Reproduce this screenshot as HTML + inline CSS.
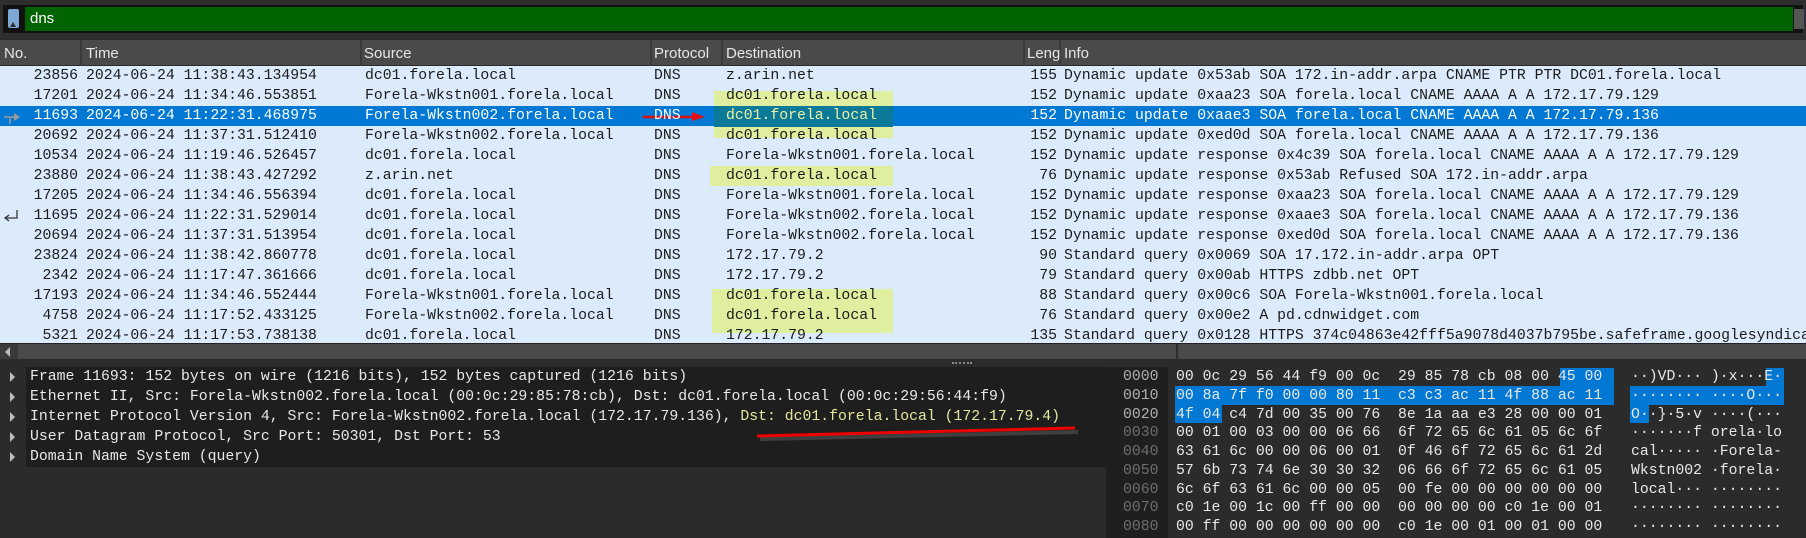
<!DOCTYPE html>
<html><head><meta charset="utf-8"><style>
*{margin:0;padding:0;box-sizing:border-box}
body{width:1806px;height:538px;background:#2b2b2b;position:relative;overflow:hidden;font-family:"Liberation Mono",monospace;font-size:14.8px}
.a{position:absolute;white-space:pre}
.ui{font-family:"Liberation Sans",sans-serif;font-size:15px;color:#e6e6e6}
.row{position:absolute;left:0;width:1806px;height:20px;background:#dcebfb;color:#1b1b1b;line-height:20px}
.sel{background:#0078d4;color:#fff}
.hl{position:absolute;background:#dfee9f}
.det{position:absolute;left:26px;width:1080px;height:20px;background:#1e1e1e;color:#e8e8e8;line-height:20px;padding-left:4px;white-space:pre}
.tri{position:absolute;left:10px;width:0;height:0;border-left:5px solid #bdbdbd;border-top:5px solid transparent;border-bottom:5px solid transparent}
.hx{position:absolute;white-space:pre;color:#e8e8e8;line-height:18.75px}
.off{position:absolute;left:1123px;white-space:pre;line-height:18.75px}
</style></head><body>
<div class="a" style="left:0;top:0;width:1806px;height:38px;background:#2e2e2e"></div>
<div class="a" style="left:3px;top:5px;width:1800px;height:28px;background:#111;"></div>
<div class="a" style="left:25px;top:7px;width:1768px;height:24px;background:#006400"></div>
<div class="a" style="left:8px;top:9px;width:11px;height:19px;background:#7ea7d6;border-radius:2px"></div>
<div class="a" style="left:10px;top:22px;width:0;height:0;border-left:3px solid transparent;border-right:3px solid transparent;border-bottom:5px solid #2e2e2e"></div>
<div class="a ui" style="left:30px;top:10px;color:#fff">dns</div>
<div class="a" style="left:1794px;top:9px;width:10px;height:20px;background:#555"></div>
<div class="a" style="left:0;top:40px;width:1806px;height:26px;background:#4a4a4a;border-bottom:1px solid #2a2a2a"></div>
<div class="a" style="left:80px;top:40px;width:2px;height:26px;background:#3a3a3a"></div>
<div class="a" style="left:360px;top:40px;width:2px;height:26px;background:#3a3a3a"></div>
<div class="a" style="left:650px;top:40px;width:2px;height:26px;background:#3a3a3a"></div>
<div class="a" style="left:721px;top:40px;width:2px;height:26px;background:#3a3a3a"></div>
<div class="a" style="left:1023px;top:40px;width:2px;height:26px;background:#3a3a3a"></div>
<div class="a" style="left:1059px;top:40px;width:2px;height:26px;background:#3a3a3a"></div>
<div class="a ui" style="left:4px;top:45px">No.</div>
<div class="a ui" style="left:86px;top:45px">Time</div>
<div class="a ui" style="left:364px;top:45px">Source</div>
<div class="a ui" style="left:654px;top:45px">Protocol</div>
<div class="a ui" style="left:726px;top:45px">Destination</div>
<div class="a ui" style="left:1027px;top:45px">Leng</div>
<div class="a ui" style="left:1064px;top:45px">Info</div>
<div class="row" style="top:66px"></div><div class="row" style="top:86px"></div><div class="row sel" style="top:106px"></div><div class="row" style="top:126px"></div><div class="row" style="top:146px"></div><div class="row" style="top:166px"></div><div class="row" style="top:186px"></div><div class="row" style="top:206px"></div><div class="row" style="top:226px"></div><div class="row" style="top:246px"></div><div class="row" style="top:266px"></div><div class="row" style="top:286px"></div><div class="row" style="top:306px"></div><div class="row" style="top:326px;height:17px;overflow:hidden"></div>
<div class="hl" style="left:714px;top:91px;width:179px;height:47px"></div>
<div class="a" style="left:714px;top:106px;width:179px;height:21px;background:#0a7a98"></div>
<div class="hl" style="left:710px;top:166px;width:183px;height:20px"></div>
<div class="hl" style="left:712px;top:289px;width:181px;height:44px"></div>
<svg class="a" style="left:0;top:0" width="1806" height="343">
<g stroke="#9a9a9a" stroke-width="1.5" fill="none"><path d="M4 117 H18 M10 117 V124"/></g><path d="M14 113 L20 117 L14 121 Z" fill="#9a9a9a"/>
<g stroke="#333" stroke-width="1.3" fill="none"><path d="M17 210 V218 H6"/><path d="M9 215 L5 218 L9 221"/></g>
<path d="M643 117 L695 117" stroke="#e01010" stroke-width="2.5"/><path d="M692 112 L705 117 L692 121 Z" fill="#e01010"/>
</svg>
<script>
var d=[
["23856","11:38:43.134954","dc01.forela.local","z.arin.net","155","Dynamic update 0x53ab SOA 172.in-addr.arpa CNAME PTR PTR DC01.forela.local"],
["17201","11:34:46.553851","Forela-Wkstn001.forela.local","dc01.forela.local","152","Dynamic update 0xaa23 SOA forela.local CNAME AAAA A A 172.17.79.129"],
["11693","11:22:31.468975","Forela-Wkstn002.forela.local","dc01.forela.local","152","Dynamic update 0xaae3 SOA forela.local CNAME AAAA A A 172.17.79.136"],
["20692","11:37:31.512410","Forela-Wkstn002.forela.local","dc01.forela.local","152","Dynamic update 0xed0d SOA forela.local CNAME AAAA A A 172.17.79.136"],
["10534","11:19:46.526457","dc01.forela.local","Forela-Wkstn001.forela.local","152","Dynamic update response 0x4c39 SOA forela.local CNAME AAAA A A 172.17.79.129"],
["23880","11:38:43.427292","z.arin.net","dc01.forela.local","76","Dynamic update response 0x53ab Refused SOA 172.in-addr.arpa"],
["17205","11:34:46.556394","dc01.forela.local","Forela-Wkstn001.forela.local","152","Dynamic update response 0xaa23 SOA forela.local CNAME AAAA A A 172.17.79.129"],
["11695","11:22:31.529014","dc01.forela.local","Forela-Wkstn002.forela.local","152","Dynamic update response 0xaae3 SOA forela.local CNAME AAAA A A 172.17.79.136"],
["20694","11:37:31.513954","dc01.forela.local","Forela-Wkstn002.forela.local","152","Dynamic update response 0xed0d SOA forela.local CNAME AAAA A A 172.17.79.136"],
["23824","11:38:42.860778","dc01.forela.local","172.17.79.2","90","Standard query 0x0069 SOA 17.172.in-addr.arpa OPT"],
["2342","11:17:47.361666","dc01.forela.local","172.17.79.2","79","Standard query 0x00ab HTTPS zdbb.net OPT"],
["17193","11:34:46.552444","Forela-Wkstn001.forela.local","dc01.forela.local","88","Standard query 0x00c6 SOA Forela-Wkstn001.forela.local"],
["4758","11:17:52.433125","Forela-Wkstn002.forela.local","dc01.forela.local","76","Standard query 0x00e2 A pd.cdnwidget.com"],
["5321","11:17:53.738138","dc01.forela.local","172.17.79.2","135","Standard query 0x0128 HTTPS 374c04863e42fff5a9078d4037b795be.safeframe.googlesyndication.com"]];
var h='';
for(var i=0;i<d.length;i++){var r=d[i],t=66+i*20,c=(i==2)?'#fff':'#1b1b1b',dc=(i==2)?'#f0f0a0':c;
h+='<div class="a" style="top:'+t+'px;left:0;width:78px;text-align:right;line-height:20px;color:'+c+'">'+r[0]+'</div>';
h+='<div class="a" style="top:'+t+'px;left:86px;line-height:20px;color:'+c+'">2024-06-24 '+r[1]+'</div>';
h+='<div class="a" style="top:'+t+'px;left:365px;line-height:20px;color:'+c+'">'+r[2]+'</div>';
h+='<div class="a" style="top:'+t+'px;left:654px;line-height:20px;color:'+c+'">DNS</div>';
h+='<div class="a" style="top:'+t+'px;left:726px;line-height:20px;color:'+dc+'">'+r[3]+'</div>';
h+='<div class="a" style="top:'+t+'px;left:990px;width:67px;text-align:right;line-height:20px;color:'+c+'">'+r[4]+'</div>';
h+='<div class="a" style="top:'+t+'px;left:1064px;line-height:20px;color:'+c+'">'+r[5]+'</div>';}
var w=document.createElement('div');w.className='a';w.style.cssText='top:0;left:0;width:1806px;height:343px;overflow:hidden';w.innerHTML=h;document.body.appendChild(w);
</script>
<div class="a" style="left:0;top:343px;width:1806px;height:16px;background:#4a4a4a;border-top:1px solid #222"></div>
<div class="a" style="left:0;top:344px;width:18px;height:15px;background:#3a3a3a"></div>
<div class="a" style="left:5px;top:347px;width:0;height:0;border-right:5px solid #bbb;border-top:5px solid transparent;border-bottom:5px solid transparent"></div>
<div class="a" style="left:1176px;top:344px;width:2px;height:15px;background:#2e2e2e"></div>
<div class="a" style="left:0;top:359px;width:1806px;height:8px;background:#2b2b2b"></div>
<div class="a" style="left:952px;top:362px;width:20px;height:2px;border-top:2px dotted #888"></div>
<div class="a" style="left:0;top:367px;width:1106px;height:171px;background:#2b2b2b"></div>
<div class="det" style="top:367px">Frame 11693: 152 bytes on wire (1216 bits), 152 bytes captured (1216 bits)</div>
<div class="det" style="top:387px">Ethernet II, Src: Forela-Wkstn002.forela.local (00:0c:29:85:78:cb), Dst: dc01.forela.local (00:0c:29:56:44:f9)</div>
<div class="det" style="top:407px">Internet Protocol Version 4, Src: Forela-Wkstn002.forela.local (172.17.79.136), <span style="color:#e6e6a0">Dst: dc01.forela.local (172.17.79.4)</span></div>
<div class="det" style="top:427px">User Datagram Protocol, Src Port: 50301, Dst Port: 53</div>
<div class="det" style="top:447px">Domain Name System (query)</div>
<div class="tri" style="top:372px"></div><div class="tri" style="top:392px"></div><div class="tri" style="top:412px"></div><div class="tri" style="top:432px"></div><div class="tri" style="top:452px"></div>
<svg class="a" style="left:0;top:0" width="1806" height="538"><path d="M760 439 L1078 432" stroke="#555" stroke-width="4" opacity=".6"/><path d="M757 436 L1075 428" stroke="#e00" stroke-width="3"/></svg>
<div class="a" style="left:1106px;top:367px;width:700px;height:171px;background:#1f1f1f"></div>
<div class="a" style="left:1168px;top:367px;width:638px;height:171px;background:#2b2b2b"></div>
<div class="a" style="left:1560px;top:368px;width:54px;height:19px;background:#0078d4"></div>
<div class="a" style="left:1175px;top:386px;width:439px;height:19px;background:#0078d4"></div>
<div class="a" style="left:1175px;top:405px;width:47px;height:18px;background:#0078d4"></div>
<div class="a" style="left:1766px;top:368px;width:18px;height:19px;background:#0078d4"></div>
<div class="a" style="left:1630px;top:386px;width:154px;height:19px;background:#0078d4"></div>
<div class="a" style="left:1630px;top:405px;width:19px;height:18px;background:#0078d4"></div>
<div class="off" style="top:368px;color:#b0b0b0">0000
0010
0020</div>
<div class="off" style="top:424.25px;color:#6e6e6e">0030
0040
0050
0060
0070
0080</div>
<div class="hx" style="left:1176px;top:368px">00 0c 29 56 44 f9 00 0c  29 85 78 cb 08 00 45 00
00 8a 7f f0 00 00 80 11  c3 c3 ac 11 4f 88 ac 11
4f 04 c4 7d 00 35 00 76  8e 1a aa e3 28 00 00 01
00 01 00 03 00 00 06 66  6f 72 65 6c 61 05 6c 6f
63 61 6c 00 00 06 00 01  0f 46 6f 72 65 6c 61 2d
57 6b 73 74 6e 30 30 32  06 66 6f 72 65 6c 61 05
6c 6f 63 61 6c 00 00 05  00 fe 00 00 00 00 00 00
c0 1e 00 1c 00 ff 00 00  00 00 00 00 c0 1e 00 01
00 ff 00 00 00 00 00 00  c0 1e 00 01 00 01 00 00</div>
<div class="hx" style="left:1631px;top:368px">··)VD··· )·x···E·
········ ····O···
O··}·5·v ····(···
·······f orela·lo
cal····· ·Forela-
Wkstn002 ·forela·
local··· ········
········ ········
········ ········</div>
</body></html>
